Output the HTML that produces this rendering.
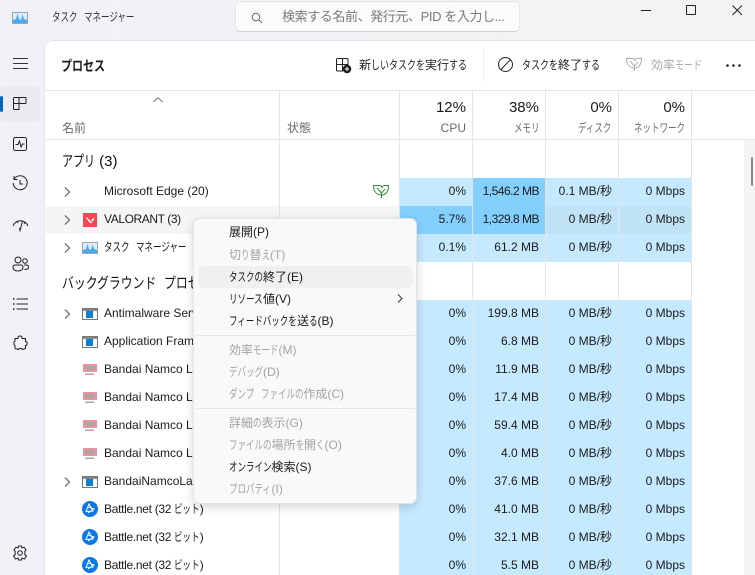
<!DOCTYPE html>
<html lang="ja"><head><meta charset="utf-8">
<style>
html,body{margin:0;padding:0;width:755px;height:575px;overflow:hidden}
body{position:relative;background:linear-gradient(90deg,#f1f1f7 0,#f2f2f6 300px,#f3f3f3 600px);font:12px "Liberation Sans","Noto Sans CJK JP",sans-serif;color:#1b1b1b}
.a{position:absolute;white-space:nowrap}
#main{position:absolute;left:45px;top:41px;width:710px;height:534px;background:#fff;border-top-left-radius:8px;box-shadow:0 0 0 1px #e5e5e5}
.line{position:absolute;background:#e5e5e5}
.c{position:absolute;height:28px}
.t{position:absolute;white-space:nowrap;line-height:16px}
.r{text-align:right}
.hd{color:#6b6b6b}
.n{left:104px}
.k,.k3,.x{display:inline-block;text-align:left;transform-origin:0 50%;letter-spacing:0;white-space:nowrap}
.k{width:calc(var(--n)*8.5px);transform:scaleX(.708)}
.k3{width:calc(var(--n)*9px);transform:scaleX(.75)}
#menu{position:absolute;left:193px;top:218px;width:224px;height:286px;background:#f9f9f9;border:1px solid #e4e4e4;border-radius:7px;box-shadow:0 3px 10px rgba(0,0,0,.16);box-sizing:border-box}
#menu div.m{position:absolute;left:35px;white-space:nowrap;line-height:16px;color:#1a1a1a;word-spacing:3px}
#menu div.d{color:#a3a3a3}
svg{position:absolute;overflow:visible}
</style></head><body>

<!-- title bar -->
<svg style="left:12px;top:12px" width="16" height="12" viewBox="0 0 16 12"><rect x=".5" y=".5" width="15" height="11" fill="#dcecf8" stroke="#9aa6b0"/><path d="M1 11V8L4 7 5.500 2 7 7 9 8 10.500 2.500 12 7 15 8V11Z" fill="#4aa8ee"/></svg>
<div class="a" style="left:52px;top:9px;line-height:16px;color:#333;word-spacing:3px"><span class="k" style="--n:3">タスク</span> <span class="k" style="--n:6">マネージャー</span></div>
<div class="a" style="left:235px;top:1px;width:285px;height:31px;box-sizing:border-box;background:#fbfbfb;border:1px solid #e5e5e5;border-bottom-color:#cfcfcf;border-radius:5px"></div>
<svg style="left:251px;top:12px" width="12" height="12" viewBox="0 0 12 12" fill="none" stroke="#666"><circle cx="5" cy="5" r="3.800"/><path d="M8 8l3 3"/></svg>
<div class="a" style="left:282px;top:9px;line-height:16px;font-size:13px;color:#7a7a7a;letter-spacing:-.4px">検索する名前、発行元、PID を入力し...</div>
<div class="a" style="left:641px;top:10px;width:10px;height:1px;background:#222"></div>
<div class="a" style="left:686px;top:5px;width:8px;height:8px;border:1px solid #222;border-radius:1px"></div>
<svg style="left:732px;top:5px" width="11" height="11" viewBox="0 0 11 11" fill="none" stroke="#222"><path d="M.5.500l9.500 9.500M10 .5L.5 10"/></svg>

<!-- sidebar -->
<svg style="left:12px;top:58px" width="16" height="12" fill="none" stroke="#333"><path d="M1 .5H16M1 5.500H16M1 10.500H16"/></svg>
<div class="a" style="left:0;top:86px;width:40px;height:36px;background:#eaeaef;border-radius:5px"></div>
<div class="a" style="left:0;top:96px;width:3px;height:16px;background:#0067c0;border-radius:2px"></div>
<svg style="left:13px;top:97px" width="14" height="13" viewBox="0 0 14 13" fill="none" stroke="#222"><path d="M.5 1.500a1 1 0 0 1 1-1H12.500a.5.500 0 0 1 .5.500V6a.5.500 0 0 1-.5.500H.5ZM.5 6.500V11.500a1 1 0 0 0 1 1H6V.5"/></svg>
<svg style="left:13px;top:137px" width="14" height="14" viewBox="0 0 14 14" fill="none" stroke="#222"><rect x=".5" y=".5" width="13" height="13" rx="2"/><path d="M2.500 7.500H5L6.500 4 8 10 9.500 7H11.500"/></svg>
<svg style="left:12px;top:175px" width="16" height="17" viewBox="0 0 16 17" fill="none" stroke="#222"><path d="M2 4.500A7 7 0 1 1 1.200 8M2 1V4.500H5.500M8 5V9H11"/></svg>
<svg style="left:12px;top:218px" width="17" height="14" viewBox="0 0 17 14" fill="none" stroke="#222"><path d="M1 8A8 8 0 0 1 16 8M10.500 3 8 12.500 7.300 10"/><path d="M5 2.800 6 5M13 4.500 12 6" /></svg>
<svg style="left:12px;top:256px" width="17" height="16" viewBox="0 0 17 16" fill="none" stroke="#222"><circle cx="6" cy="4" r="3"/><circle cx="13" cy="5" r="2.300"/><path d="M1 11.500c0-2 1-2.500 2-2.500H9c1 0 2 .5 2 2.500 0 2-2 3.500-5 3.500S1 13.500 1 11.500ZM12 9h2c1.500 0 2.500.500 2.500 2 0 1.500-1.500 2.500-4 2.500"/></svg>
<svg style="left:12px;top:298px" width="16" height="12" fill="none" stroke="#222"><path d="M4.500 1H16M4.500 6H16M4.500 11H16"/><path d="M1 1H2.500M1 6H2.500M1 11H2.500" stroke-width="1.500"/></svg>
<svg style="left:13px;top:335px" width="15" height="16" viewBox="0 0 15 16" fill="none" stroke="#222"><path d="M5 2.500C5 .5 9 .5 9 2.500V3.500H12.500V6.500C14.500 6 15 10.500 12.500 10.500V13.500L9.500 14.500C9 13 6 13 5.500 14.500L2 13.500V10.500C.5 10 .5 6.500 2 6V3.500H5Z"/></svg>
<svg style="left:12px;top:545px" width="16" height="16" viewBox="0 0 16 16" fill="none" stroke="#222"><circle cx="8" cy="8" r="2.300"/><path d="M6.500 1H9.500L10 3 12 2.200 14 5 12.700 6.500 13 8 12.700 9.500 14.500 11 12.500 14 10 13 9.500 15H6.500L6 13 3.500 14 1.500 11 3.300 9.500 3 8 3.300 6.500 2 5 4 2.200 6 3Z"/></svg>

<div id="main"></div>

<!-- toolbar -->
<div class="a" style="left:61px;top:56px;font-size:14px;line-height:20px;font-weight:bold;color:#1a1a1a"><span class="x" style="width:44px;transform:scaleX(.786)">プロセス</span></div>
<svg style="left:336px;top:58px" width="15" height="15" viewBox="0 0 15 15" fill="none" stroke="#222"><path d="M.5 1.500a1 1 0 0 1 1-1H11a1 1 0 0 1 1 1V6.500H.5ZM.5 6.500V12a1 1 0 0 0 1 1H6.500V.5"/><circle cx="11" cy="11" r="3.800" fill="#222"/><path d="M9 11h4M11 9v4" stroke="#fff"/></svg>
<div class="a" style="left:359px;top:57px;line-height:17px;color:#222">新<span class="k3" style="--n:6">しいタスクを</span>実行<span class="k3" style="--n:2">する</span></div>
<div class="line" style="left:483px;top:49px;width:1px;height:32px;background:#ececec"></div>
<svg style="left:498px;top:57px" width="15" height="15" fill="none" stroke="#222"><circle cx="7.500" cy="7.500" r="7"/><path d="M3 12.500L12.500 2.500"/></svg>
<div class="a" style="left:522px;top:57px;line-height:17px;color:#222"><span class="k3" style="--n:4">タスクを</span>終了<span class="k3" style="--n:2">する</span></div>
<svg style="left:626px;top:57px" width="16" height="15" viewBox="0 0 16 15" fill="none" stroke="#aaa"><path d="M.5 1.500H6C8 1.500 8.500 2.500 9 3.500 9.500 2 11 1.500 12 1.500H15.500C15.500 7 13 11 9 11 4 11 .5 8 .5 1.500Z"/><path d="M4 4 8.500 9V14M8.500 9 12 5"/></svg>
<div class="a" style="left:651px;top:57px;line-height:17px;color:#a9a9a9">効率<span class="k3" style="--n:3">モード</span></div>
<svg style="left:726px;top:64px" width="15" height="3" fill="#222"><circle cx="1.500" cy="1.500" r="1.300"/><circle cx="7.500" cy="1.500" r="1.300"/><circle cx="13.500" cy="1.500" r="1.300"/></svg>

<!-- table header lines -->
<div class="line" style="left:45px;top:90px;width:710px;height:1px"></div>
<div class="line" style="left:45px;top:139px;width:710px;height:1px"></div>
<svg style="left:153px;top:97px" width="10" height="6" fill="none" stroke="#777"><path d="M.5 5 5 .8 9.500 5"/></svg>
<div class="a hd" style="left:62px;top:120px;line-height:16px">名前</div>
<div class="a hd" style="left:287px;top:120px;line-height:16px">状態</div>
<div class="t r" style="left:399px;top:99px;width:67px;font-size:15px;line-height:18px">12%</div>
<div class="t r" style="left:472px;top:99px;width:67px;font-size:15px;line-height:18px">38%</div>
<div class="t r" style="left:545px;top:99px;width:67px;font-size:15px;line-height:18px">0%</div>
<div class="t r" style="left:618px;top:99px;width:67px;font-size:15px;line-height:18px">0%</div>
<div class="t r hd" style="left:399px;top:120px;width:67px">CPU</div>
<div class="t r hd" style="left:472px;top:120px;width:67px"><span class="k" style="--n:3">メモリ</span></div>
<div class="t r hd" style="left:545px;top:120px;width:67px"><span class="k" style="--n:4">ディスク</span></div>
<div class="t r hd" style="left:618px;top:120px;width:67px"><span class="k" style="--n:6">ネットワーク</span></div>

<!-- scrollbar track -->
<div class="a" style="left:744px;top:140px;width:11px;height:435px;background:#f4f4f4"></div>
<div class="a" style="left:751px;top:157px;width:2px;height:29px;background:#8a8a8a;border-radius:1px"></div>

<!-- section headers -->
<div class="a" style="left:62px;top:152px;font-size:15px;line-height:20px;color:#111"><span class="x" style="width:33px;transform:scaleX(.733)">アプリ</span> (3)</div>
<div class="a" style="left:62px;top:274px;font-size:15px;line-height:20px;color:#111;word-spacing:3px"><span class="x" style="width:95px;transform:scaleX(.79)">バックグラウンド</span> <span class="x" style="width:47px;transform:scaleX(.79)">プロセス</span></div>

<!-- hover row -->
<div class="c" style="left:46px;top:206px;width:353px;background:#f5f5f5"></div>

<!-- cells: app rows -->
<div class="c" style="left:400px;top:178px;width:72px;background:#c5e9ff"></div>
<div class="c" style="left:473px;top:178px;width:72px;background:#83d0ff"></div>
<div class="c" style="left:546px;top:178px;width:145px;background:#c5e9ff"></div>
<div class="c" style="left:400px;top:206px;width:72px;background:#83d0ff"></div>
<div class="c" style="left:473px;top:206px;width:72px;background:#83d0ff"></div>
<div class="c" style="left:546px;top:206px;width:145px;background:#c0e3f8"></div>
<div class="c" style="left:400px;top:234px;width:291px;background:#c5e9ff"></div>
<div class="c" style="left:400px;top:300px;width:291px;height:275px;background:#c5e9ff"></div>

<!-- column lines -->
<div class="line" style="left:279px;top:91px;width:1px;height:484px"></div>
<div class="line" style="left:399px;top:91px;width:1px;height:484px"></div>
<div class="line" style="left:472px;top:91px;width:1px;height:484px"></div>
<div class="line" style="left:545px;top:91px;width:1px;height:484px"></div>
<div class="line" style="left:618px;top:91px;width:1px;height:484px"></div>
<div class="line" style="left:691px;top:91px;width:1px;height:484px"></div>

<!-- chevrons -->
<svg style="left:64px;top:187px" width="7" height="10" fill="none" stroke="#777" stroke-width="1.400"><path d="M1 .5 5.500 5 1 9.500"/></svg>
<svg style="left:64px;top:215px" width="7" height="10" fill="none" stroke="#777" stroke-width="1.400"><path d="M1 .5 5.500 5 1 9.500"/></svg>
<svg style="left:64px;top:243px" width="7" height="10" fill="none" stroke="#777" stroke-width="1.400"><path d="M1 .5 5.500 5 1 9.500"/></svg>
<svg style="left:64px;top:309px" width="7" height="10" fill="none" stroke="#777" stroke-width="1.400"><path d="M1 .5 5.500 5 1 9.500"/></svg>
<svg style="left:64px;top:477px" width="7" height="10" fill="none" stroke="#777" stroke-width="1.400"><path d="M1 .5 5.500 5 1 9.500"/></svg>

<!-- leaf -->
<svg style="left:373px;top:184px" width="16" height="15" viewBox="0 0 16 15" fill="none" stroke="#2f8a33"><path d="M.5 1.500H6C8 1.500 8.500 2.500 9 3.500 9.500 2 11 1.500 12 1.500H15.500C15.500 7 13 11 9 11 4 11 .5 8 .5 1.500Z"/><path d="M4 4 8.500 9V14M8.500 9 12 5"/></svg>

<!-- row icons -->
<svg style="left:83px;top:213px" width="14" height="14" viewBox="0 0 14 14"><rect width="14" height="14" fill="#fa4454"/><path d="M3 5 7 10H9.500L3.500 4ZM8 7.500 11 4.500V7L9.500 8.500Z" fill="#fff"/></svg>
<svg style="left:82px;top:242px" width="16" height="12" viewBox="0 0 16 12"><rect x=".5" y=".5" width="15" height="11" fill="#dcecf8" stroke="#9aa6b0"/><path d="M1 11V8L4 7 5.500 2 7 7 9 8 10.500 2.500 12 7 15 8V11Z" fill="#4aa8ee"/></svg>

<svg style="left:82px;top:308px" width="16" height="12" viewBox="0 0 16 12"><rect x=".5" y=".5" width="15" height="11" fill="#fff" stroke="#777"/><rect x="1" y="1" width="14" height="2" fill="#888"/><rect x="4" y="3" width="7" height="7" fill="#0f7fd6"/></svg>
<svg style="left:82px;top:336px" width="16" height="12" viewBox="0 0 16 12"><rect x=".5" y=".5" width="15" height="11" fill="#fff" stroke="#777"/><rect x="1" y="1" width="14" height="2" fill="#888"/><rect x="4" y="3" width="7" height="7" fill="#0f7fd6"/></svg>
<svg style="left:83px;top:364px" width="14" height="12" viewBox="0 0 14 12"><rect width="14" height="8" fill="#f2939c"/><rect x="2" y="1.500" width="10" height="5" fill="#b0a4a6"/><rect x="2" y="9.500" width="9" height="1.500" fill="#aaa"/></svg>
<svg style="left:83px;top:392px" width="14" height="12" viewBox="0 0 14 12"><rect width="14" height="8" fill="#f2939c"/><rect x="2" y="1.500" width="10" height="5" fill="#b0a4a6"/><rect x="2" y="9.500" width="9" height="1.500" fill="#aaa"/></svg>
<svg style="left:83px;top:420px" width="14" height="12" viewBox="0 0 14 12"><rect width="14" height="8" fill="#f2939c"/><rect x="2" y="1.500" width="10" height="5" fill="#b0a4a6"/><rect x="2" y="9.500" width="9" height="1.500" fill="#aaa"/></svg>
<svg style="left:83px;top:448px" width="14" height="12" viewBox="0 0 14 12"><rect width="14" height="8" fill="#f2939c"/><rect x="2" y="1.500" width="10" height="5" fill="#b0a4a6"/><rect x="2" y="9.500" width="9" height="1.500" fill="#aaa"/></svg>
<svg style="left:82px;top:476px" width="16" height="12" viewBox="0 0 16 12"><rect x=".5" y=".5" width="15" height="11" fill="#fff" stroke="#777"/><rect x="1" y="1" width="14" height="2" fill="#888"/><rect x="4" y="3" width="7" height="7" fill="#0f7fd6"/></svg>
<svg style="left:82px;top:501px" width="16" height="16" viewBox="0 0 16 16"><circle cx="8" cy="8" r="8" fill="#0a78e6"/><path d="M7 3 11 10 4 10.500ZM6 6 12 8 6 12" fill="none" stroke="#fff"/></svg>
<svg style="left:82px;top:529px" width="16" height="16" viewBox="0 0 16 16"><circle cx="8" cy="8" r="8" fill="#0a78e6"/><path d="M7 3 11 10 4 10.500ZM6 6 12 8 6 12" fill="none" stroke="#fff"/></svg>
<svg style="left:82px;top:557px" width="16" height="16" viewBox="0 0 16 16"><circle cx="8" cy="8" r="8" fill="#0a78e6"/><path d="M7 3 11 10 4 10.500ZM6 6 12 8 6 12" fill="none" stroke="#fff"/></svg>

<!-- names -->
<div class="t n" style="top:183px">Microsoft Edge (20)</div>
<div class="t n" style="top:211px;letter-spacing:-.4px">VALORANT (3)</div>
<div class="t n" style="top:239px;word-spacing:3px"><span class="k" style="--n:3">タスク</span> <span class="k" style="--n:6">マネージャー</span></div>
<div class="t n" style="top:305px">Antimalware Service</div>
<div class="t n" style="top:333px">Application Frame</div>
<div class="t n" style="top:361px">Bandai Namco Lau</div>
<div class="t n" style="top:389px">Bandai Namco Lau</div>
<div class="t n" style="top:417px">Bandai Namco Lau</div>
<div class="t n" style="top:445px">Bandai Namco Lau</div>
<div class="t n" style="top:473px">BandaiNamcoLaunc</div>
<div class="t n" style="top:501px;letter-spacing:-.3px">Battle.net (32 <span class="k" style="--n:3">ビット</span>)</div>
<div class="t n" style="top:529px;letter-spacing:-.3px">Battle.net (32 <span class="k" style="--n:3">ビット</span>)</div>
<div class="t n" style="top:557px;letter-spacing:-.3px">Battle.net (32 <span class="k" style="--n:3">ビット</span>)</div>

<!-- values -->
<div class="t r" style="left:399px;top:183px;width:67px">0%</div><div class="t r" style="left:472px;top:183px;width:67px;letter-spacing:-.5px">1,546.2 MB</div><div class="t r" style="left:545px;top:183px;width:67px">0.1 MB/秒</div><div class="t r" style="left:618px;top:183px;width:67px">0 Mbps</div>
<div class="t r" style="left:399px;top:211px;width:67px">5.7%</div><div class="t r" style="left:472px;top:211px;width:67px;letter-spacing:-.5px">1,329.8 MB</div><div class="t r" style="left:545px;top:211px;width:67px">0 MB/秒</div><div class="t r" style="left:618px;top:211px;width:67px">0 Mbps</div>
<div class="t r" style="left:399px;top:239px;width:67px">0.1%</div><div class="t r" style="left:472px;top:239px;width:67px">61.2 MB</div><div class="t r" style="left:545px;top:239px;width:67px">0 MB/秒</div><div class="t r" style="left:618px;top:239px;width:67px">0 Mbps</div>
<div class="t r" style="left:399px;top:305px;width:67px">0%</div><div class="t r" style="left:472px;top:305px;width:67px">199.8 MB</div><div class="t r" style="left:545px;top:305px;width:67px">0 MB/秒</div><div class="t r" style="left:618px;top:305px;width:67px">0 Mbps</div>
<div class="t r" style="left:399px;top:333px;width:67px">0%</div><div class="t r" style="left:472px;top:333px;width:67px">6.8 MB</div><div class="t r" style="left:545px;top:333px;width:67px">0 MB/秒</div><div class="t r" style="left:618px;top:333px;width:67px">0 Mbps</div>
<div class="t r" style="left:399px;top:361px;width:67px">0%</div><div class="t r" style="left:472px;top:361px;width:67px">11.9 MB</div><div class="t r" style="left:545px;top:361px;width:67px">0 MB/秒</div><div class="t r" style="left:618px;top:361px;width:67px">0 Mbps</div>
<div class="t r" style="left:399px;top:389px;width:67px">0%</div><div class="t r" style="left:472px;top:389px;width:67px">17.4 MB</div><div class="t r" style="left:545px;top:389px;width:67px">0 MB/秒</div><div class="t r" style="left:618px;top:389px;width:67px">0 Mbps</div>
<div class="t r" style="left:399px;top:417px;width:67px">0%</div><div class="t r" style="left:472px;top:417px;width:67px">59.4 MB</div><div class="t r" style="left:545px;top:417px;width:67px">0 MB/秒</div><div class="t r" style="left:618px;top:417px;width:67px">0 Mbps</div>
<div class="t r" style="left:399px;top:445px;width:67px">0%</div><div class="t r" style="left:472px;top:445px;width:67px">4.0 MB</div><div class="t r" style="left:545px;top:445px;width:67px">0 MB/秒</div><div class="t r" style="left:618px;top:445px;width:67px">0 Mbps</div>
<div class="t r" style="left:399px;top:473px;width:67px">0%</div><div class="t r" style="left:472px;top:473px;width:67px">37.6 MB</div><div class="t r" style="left:545px;top:473px;width:67px">0 MB/秒</div><div class="t r" style="left:618px;top:473px;width:67px">0 Mbps</div>
<div class="t r" style="left:399px;top:501px;width:67px">0%</div><div class="t r" style="left:472px;top:501px;width:67px">41.0 MB</div><div class="t r" style="left:545px;top:501px;width:67px">0 MB/秒</div><div class="t r" style="left:618px;top:501px;width:67px">0 Mbps</div>
<div class="t r" style="left:399px;top:529px;width:67px">0%</div><div class="t r" style="left:472px;top:529px;width:67px">32.1 MB</div><div class="t r" style="left:545px;top:529px;width:67px">0 MB/秒</div><div class="t r" style="left:618px;top:529px;width:67px">0 Mbps</div>
<div class="t r" style="left:399px;top:557px;width:67px">0%</div><div class="t r" style="left:472px;top:557px;width:67px">5.5 MB</div><div class="t r" style="left:545px;top:557px;width:67px">0 MB/秒</div><div class="t r" style="left:618px;top:557px;width:67px">0 Mbps</div>

<!-- context menu -->
<div id="menu">
<div style="position:absolute;left:4px;top:47px;width:215px;height:22px;background:#f0f0f0;border-radius:5px"></div>
<div style="position:absolute;left:2px;top:116px;width:219px;height:1px;background:#e6e6e6"></div>
<div style="position:absolute;left:2px;top:189px;width:219px;height:1px;background:#e6e6e6"></div>
<div class="m" style="top:5px">展開(P)</div>
<div class="m d" style="top:28px">切<span class="k" style="--n:1">り</span>替<span class="k" style="--n:1">え</span>(T)</div>
<div class="m" style="top:50px"><span class="k" style="--n:4">タスクの</span>終了(E)</div>
<div class="m" style="top:72px"><span class="k" style="--n:4">リソース</span>値(V)</div>
<div class="m" style="top:94px"><span class="k" style="--n:8">フィードバックを</span>送<span class="k" style="--n:1">る</span>(B)</div>
<div class="m d" style="top:123px">効率<span class="k" style="--n:3">モード</span>(M)</div>
<div class="m d" style="top:145px"><span class="k" style="--n:4">デバッグ</span>(D)</div>
<div class="m d" style="top:167px"><span class="k" style="--n:3">ダンプ</span> <span class="k" style="--n:5">ファイルの</span>作成(C)</div>
<div class="m d" style="top:196px">詳細<span class="k" style="--n:1">の</span>表示(G)</div>
<div class="m d" style="top:218px"><span class="k" style="--n:5">ファイルの</span>場所<span class="k" style="--n:1">を</span>開<span class="k" style="--n:1">く</span>(O)</div>
<div class="m" style="top:240px"><span class="k" style="--n:5">オンライン</span>検索(S)</div>
<div class="m d" style="top:262px"><span class="k" style="--n:5">プロパティ</span>(I)</div>
<svg style="left:203px;top:75px" width="6" height="9" fill="none" stroke="#333"><path d="M1 .5 5 4.500 1 8.500"/></svg>
</div>

</body></html>
